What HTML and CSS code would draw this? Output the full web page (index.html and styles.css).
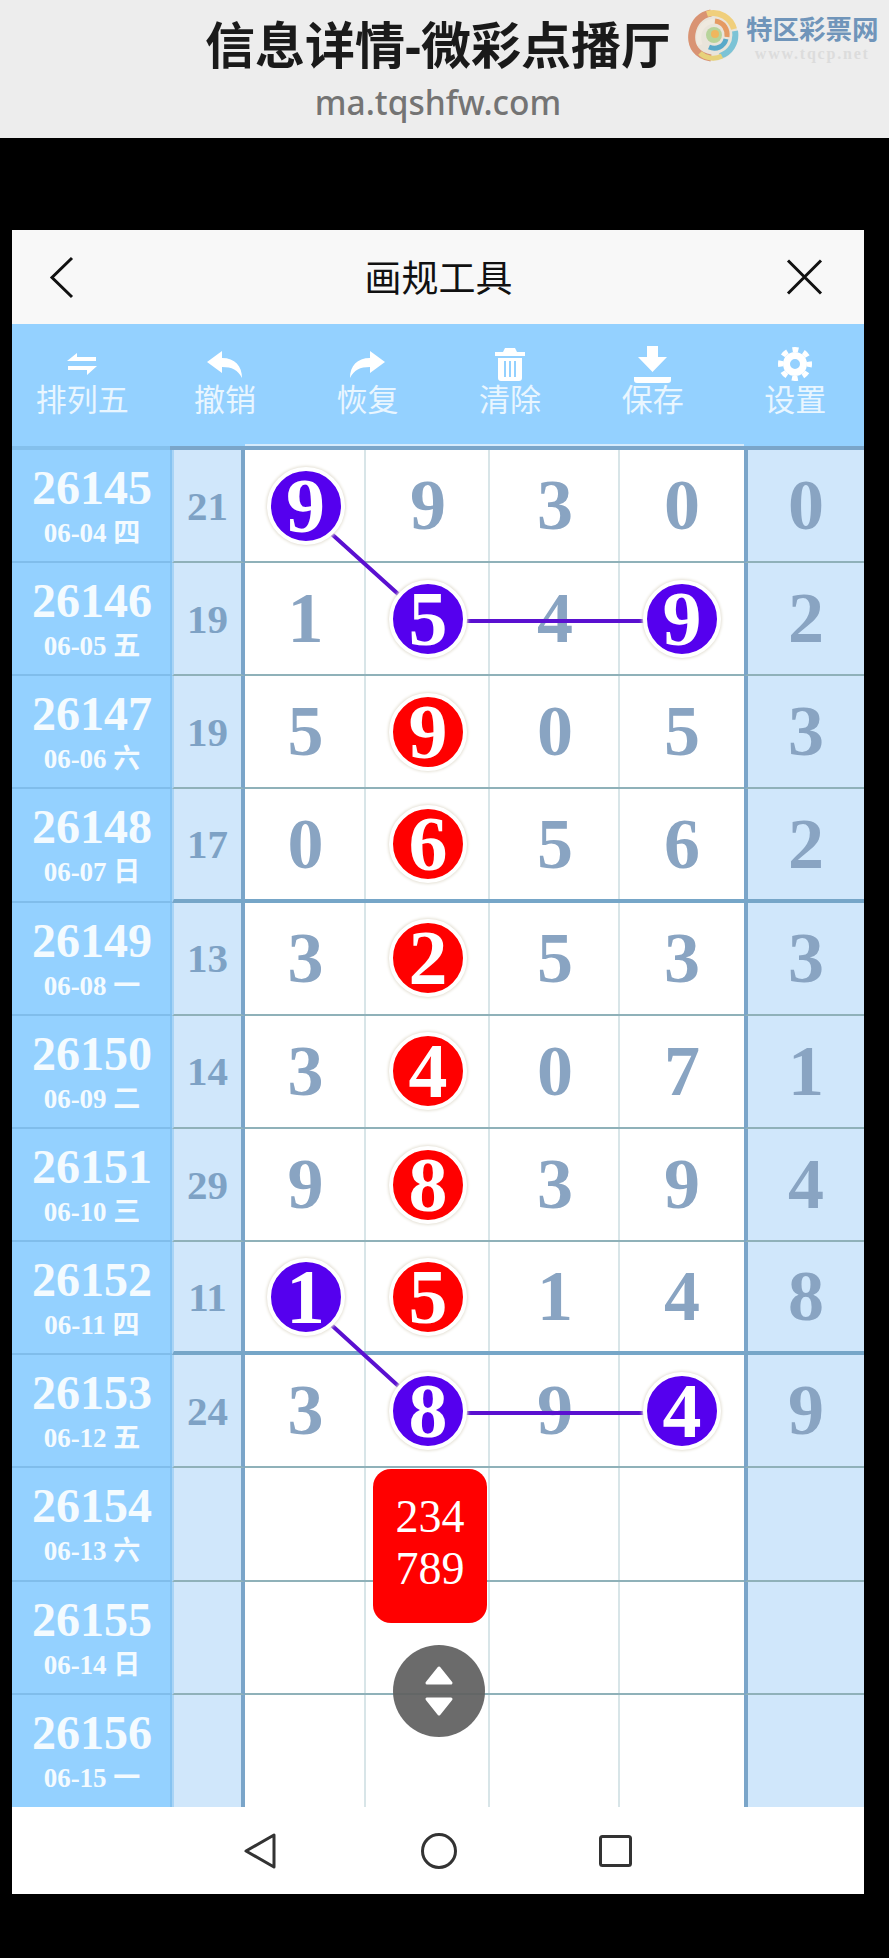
FILE: index.html
```html
<!DOCTYPE html>
<html lang="zh">
<head>
  <meta charset="UTF-8">
  <title>信息详情-微彩点播厅</title>
  <link rel="stylesheet" href="styles.css">
</head>
<body>
  <header class="site-head">
    <h1>信息详情-微彩点播厅</h1>
    <p class="site-url">ma.tqshfw.com</p>
    <div class="logo">
      <svg class="logo-mark" width="52" height="54" viewBox="0 0 52 54" fill="none">
        <circle cx="26" cy="27" r="25" fill="#e9e4da"/>
        <path d="M24 49C10 47 3 37 5 24C7 13 14 6 24 4" stroke="#d99373" stroke-width="7"/>
        <path d="M20 5C32 1 44 9 47 20" stroke="#f0cf7c" stroke-width="6"/>
        <path d="M48 22C50 34 43 44 33 47" stroke="#7cc3d6" stroke-width="6"/>
        <path d="M35 47C27 51 18 49 13 44" stroke="#e7d27a" stroke-width="5"/>
        <path d="M13 36C9 24 15 13 27 12" stroke="#efe9df" stroke-width="5"/>
        <path d="M28 12C37 13 41 21 40 28" stroke="#e59a62" stroke-width="5"/>
        <path d="M39 30C37 38 29 41 22 38" stroke="#59a9c9" stroke-width="5"/>
        <circle cx="27" cy="26" r="8" fill="#b7d39a"/>
        <circle cx="28" cy="25" r="4" fill="#f0b65e"/>
      </svg>
      <div class="logo-text">
        <div class="logo-name">特区彩票网</div>
        <div class="logo-web">www.tqcp.net</div>
      </div>
    </div>
  </header>

  <main class="panel">
    <nav class="title-bar">
      <svg width="26" height="43" viewBox="0 0 26 43" fill="none"><path d="M23 2L3 21.5L23 41" stroke="#111" stroke-width="3"/></svg>
      <div class="title-text">画规工具</div>
      <svg width="37" height="36" viewBox="0 0 37 36" fill="none"><path d="M2 1.5L35 34.5M35 1.5L2 34.5" stroke="#111" stroke-width="3"/></svg>
    </nav>

    <div class="toolbar">
      <div class="tool">
        <span class="tool-icon"><svg width="30" height="24" viewBox="0 0 30 24" fill="#fff"><path d="M0 9L10 1V5H29V9ZM1 14H30L20 23V18H1Z"/></svg></span>
        <span>排列五</span>
      </div>
      <div class="tool">
        <span class="tool-icon"><svg width="36" height="27" viewBox="0 0 36 27" fill="#fff"><path d="M0 11L15 0V7C28 7 35 15 35 27C31 19 25 16 15 16V22Z"/></svg></span>
        <span>撤销</span>
      </div>
      <div class="tool">
        <span class="tool-icon"><svg width="36" height="27" viewBox="0 0 36 27" fill="#fff"><path d="M36 11L21 0V7C8 7 1 15 1 27C5 19 11 16 21 16V22Z"/></svg></span>
        <span>恢复</span>
      </div>
      <div class="tool">
        <span class="tool-icon"><svg width="30" height="33" viewBox="0 0 30 33" fill="#fff"><path d="M10 0H20L22 4H30V8H0V4H8ZM3 10H27V30Q27 33 24 33H6Q3 33 3 30ZM9 13V29H11V13ZM14 13V29H16V13ZM19 13V29H21V13Z" fill-rule="evenodd"/></svg></span>
        <span>清除</span>
      </div>
      <div class="tool">
        <span class="tool-icon"><svg width="37" height="37" viewBox="0 0 37 37" fill="#fff"><path d="M13 0H24V11H33L18.500 26L4 11H13ZM0 31H37V34Q37 37 34 37H3Q0 37 0 34Z"/></svg></span>
        <span>保存</span>
      </div>
      <div class="tool">
        <span class="tool-icon"><svg width="34" height="34" viewBox="0 0 34 34" fill="none" stroke="#fff"><circle cx="17" cy="17" r="8.500" stroke-width="7"/><circle cx="17" cy="17" r="14.500" stroke-width="5" stroke-dasharray="6 5.390" stroke-dashoffset="3"/></svg></span>
        <span>设置</span>
      </div>
    </div>

    <section class="board">
      <div class="row">
        <div class="issue"><b>26145</b><small>06-04 四</small></div><div class="sum">21</div>
        <div class="cell"><i class="ball blue">9</i></div><div class="cell">9</div><div class="cell">3</div><div class="cell">0</div><div class="tail">0</div>
      </div>
      <div class="row">
        <div class="issue"><b>26146</b><small>06-05 五</small></div><div class="sum">19</div>
        <div class="cell">1</div><div class="cell"><i class="ball blue">5</i></div><div class="cell">4</div><div class="cell"><i class="ball blue">9</i></div><div class="tail">2</div>
      </div>
      <div class="row">
        <div class="issue"><b>26147</b><small>06-06 六</small></div><div class="sum">19</div>
        <div class="cell">5</div><div class="cell"><i class="ball red">9</i></div><div class="cell">0</div><div class="cell">5</div><div class="tail">3</div>
      </div>
      <div class="row heavy">
        <div class="issue"><b>26148</b><small>06-07 日</small></div><div class="sum">17</div>
        <div class="cell">0</div><div class="cell"><i class="ball red">6</i></div><div class="cell">5</div><div class="cell">6</div><div class="tail">2</div>
      </div>
      <div class="row">
        <div class="issue"><b>26149</b><small>06-08 一</small></div><div class="sum">13</div>
        <div class="cell">3</div><div class="cell"><i class="ball red">2</i></div><div class="cell">5</div><div class="cell">3</div><div class="tail">3</div>
      </div>
      <div class="row">
        <div class="issue"><b>26150</b><small>06-09 二</small></div><div class="sum">14</div>
        <div class="cell">3</div><div class="cell"><i class="ball red">4</i></div><div class="cell">0</div><div class="cell">7</div><div class="tail">1</div>
      </div>
      <div class="row">
        <div class="issue"><b>26151</b><small>06-10 三</small></div><div class="sum">29</div>
        <div class="cell">9</div><div class="cell"><i class="ball red">8</i></div><div class="cell">3</div><div class="cell">9</div><div class="tail">4</div>
      </div>
      <div class="row heavy">
        <div class="issue"><b>26152</b><small>06-11 四</small></div><div class="sum">11</div>
        <div class="cell"><i class="ball blue">1</i></div><div class="cell"><i class="ball red">5</i></div><div class="cell">1</div><div class="cell">4</div><div class="tail">8</div>
      </div>
      <div class="row">
        <div class="issue"><b>26153</b><small>06-12 五</small></div><div class="sum">24</div>
        <div class="cell">3</div><div class="cell"><i class="ball blue">8</i></div><div class="cell">9</div><div class="cell"><i class="ball blue">4</i></div><div class="tail">9</div>
      </div>
      <div class="row">
        <div class="issue"><b>26154</b><small>06-13 六</small></div><div class="sum"></div>
        <div class="cell"></div><div class="cell"></div><div class="cell"></div><div class="cell"></div><div class="tail"></div>
      </div>
      <div class="row">
        <div class="issue"><b>26155</b><small>06-14 日</small></div><div class="sum"></div>
        <div class="cell"></div><div class="cell"></div><div class="cell"></div><div class="cell"></div><div class="tail"></div>
      </div>
      <div class="row last">
        <div class="issue"><b>26156</b><small>06-15 一</small></div><div class="sum"></div>
        <div class="cell"></div><div class="cell"></div><div class="cell"></div><div class="cell"></div><div class="tail"></div>
      </div>

      <svg class="links" width="852" height="1362" viewBox="0 0 852 1362" fill="none" stroke="#5a10d0" stroke-width="4">
        <path d="M292 59L416 171H670"/>
        <path d="M292 850L416 963H670"/>
      </svg>

      <div class="hint">234<br>789</div>
      <div class="scroll-btn">
        <svg width="30" height="60" viewBox="0 0 30 60" fill="#fff" stroke="#fff" stroke-width="3" stroke-linejoin="round"><path d="M15 7L27 22H3Z"/><path d="M3 38H27L15 53Z"/></svg>
      </div>
    </section>

    <footer class="sys-nav">
      <svg width="32" height="36" viewBox="0 0 32 36" fill="none" stroke="#333" stroke-width="3" stroke-linejoin="round"><path d="M30 2V34L2 18Z"/></svg>
      <svg width="36" height="36" viewBox="0 0 36 36" fill="none" stroke="#333" stroke-width="3"><circle cx="18" cy="18" r="16.500"/></svg>
      <svg class="sys-square" width="33" height="32" viewBox="0 0 33 32" fill="none" stroke="#333" stroke-width="3"><rect x="1.500" y="1.500" width="30" height="29" rx="2"/></svg>
    </footer>
  </main>
</body>
</html>
```

FILE: styles.css
```css
body {
  margin: 0;
  background: #000;
  font-family: "Liberation Serif", "Noto Sans CJK SC", serif;
}

.site-head {
  position: relative;
  height: 138px;
  padding-right: 13px;
  box-sizing: border-box;
  background: #ededed;
  text-align: center;
  font-family: "Noto Sans", "Noto Sans CJK SC", sans-serif;
}

.site-head h1 {
  margin: 0;
  padding-top: 10px;
  font-size: 50px;
  line-height: 70px;
  font-weight: 700;
  color: #1a1a1a;
}

.site-url {
  margin: 0;
  font-size: 33.500px;
  line-height: 44px;
  font-weight: 500;
  color: #747474;
}

.logo {
  position: absolute;
  left: 687px;
  top: 9px;
  display: flex;
  gap: 7px;
}

.logo-name {
  margin-top: 6px;
  font-size: 26.500px;
  line-height: 28px;
  font-weight: 700;
  color: #7095ba;
  white-space: nowrap;
}

.logo-web {
  margin-top: 1px;
  font-family: "Liberation Serif", serif;
  font-size: 16px;
  line-height: 20px;
  font-weight: 700;
  letter-spacing: 1.800px;
  color: #dcdcdc;
}

.panel {
  width: 852px;
  margin: 92px 0 0 12px;
  background: #fff;
}

.title-bar {
  display: flex;
  align-items: center;
  justify-content: space-between;
  height: 94px;
  padding: 0 41px 0 37px;
  background: #f8f8f8;
  font-family: "Noto Sans CJK SC", sans-serif;
}

.title-text {
  margin: 0 0 3px 16px;
  font-size: 37px;
  color: #111;
}

.toolbar {
  display: flex;
  height: 122px;
  background: #94d1ff;
  font-family: "Noto Sans CJK SC", sans-serif;
  font-size: 31px;
  color: #e9f6ff;
}

.tool {
  flex: none;
  display: flex;
  flex-direction: column;
  align-items: center;
  width: 142.600px;
  line-height: 40px;
}

.tool:first-child {
  margin-left: -1px;
}

.tool:last-child {
  width: 139px;
  padding-left: 3.600px;
  box-sizing: border-box;
}

.tool-icon {
  display: flex;
  align-items: center;
  height: 38px;
  margin: 21px 0 -5px;
}

.board {
  position: relative;
  border-top: 4px solid #7aa5c9;
}

/* the rule over the date column is paler, and a light band sits over the number cells */
.board::before {
  content: "";
  position: absolute;
  left: 0;
  top: -4px;
  width: 158px;
  height: 4px;
  background: #84c0ec;
}

.board::after {
  content: "";
  position: absolute;
  left: 233px;
  top: -6px;
  width: 499px;
  height: 2px;
  background: #d6ebfc;
}

.row {
  display: grid;
  grid-template-columns: 160px 73px 121px 124px 130px 124px 120px;
  height: 113.170px;
}

.row > div {
  box-sizing: border-box;
  border-bottom: 2px solid #8fb1b9;
}

.row.heavy > div {
  border-bottom: 4px solid #76a6c8;
}

.row.last {
  height: 112px;
}

.row.last > div {
  border-bottom: 0;
}

.row > .issue,
.row.heavy > .issue {
  display: flex;
  flex-direction: column;
  align-items: center;
  border-bottom: 2px solid #80bdeb;
  background: #94d1ff;
  box-shadow: inset -2px 0 0 #85c3f1;
  color: #f4fbff;
  font-weight: 700;
}

.row.last > .issue {
  border-bottom: 0;
}

.issue b {
  margin-top: 13px;
  font-size: 48px;
  line-height: 50px;
}

.issue small {
  margin-top: 2px;
  font-size: 27px;
  line-height: 36px;
}

.sum,
.cell,
.tail {
  display: flex;
  align-items: center;
  justify-content: center;
  font-weight: 700;
}

.sum {
  background: #d0e7fb;
  border-left: 2px solid #a8d4f6;
  border-right: 4px solid #7aa5c9;
  font-size: 41px;
  color: #7ea2c5;
}

.cell {
  box-shadow: inset -2px 0 0 #d8e5e8;
  font-size: 72px;
  color: #89a4c2;
}

.cell:nth-child(6) {
  box-shadow: none;
}

.tail {
  background: #d0e7fb;
  border-left: 4px solid #7aa5c9;
  font-size: 72px;
  color: #89a4c2;
}

.ball {
  position: relative;
  z-index: 2;
  display: flex;
  align-items: center;
  justify-content: center;
  width: 70px;
  height: 70px;
  border: 4px solid #fff;
  border-radius: 50%;
  box-shadow: 0 0 3px 1px #e4e0d4;
  font-style: normal;
  font-size: 78px;
  color: #fff;
}

.ball.blue {
  background: #5500ee;
}

.ball.red {
  background: #f00;
}

.links {
  position: absolute;
  left: 0;
  top: 0;
  z-index: 1;
}

.hint {
  position: absolute;
  left: 361px;
  top: 1019px;
  z-index: 2;
  width: 114px;
  height: 154px;
  padding-top: 22px;
  box-sizing: border-box;
  border-radius: 18px;
  background: #f00;
  text-align: center;
  font-size: 46px;
  line-height: 52px;
  color: #fff;
}

.scroll-btn {
  position: absolute;
  left: 381px;
  top: 1195px;
  z-index: 3;
  display: flex;
  align-items: center;
  justify-content: center;
  width: 92px;
  height: 92px;
  border-radius: 50%;
  background: rgba(96, 96, 96, 0.93);
}

.sys-nav {
  display: flex;
  align-items: center;
  height: 87px;
  padding: 2px 0 0 232px;
  box-sizing: border-box;
  gap: 145px;
  background: #fff;
}

.sys-square {
  margin-left: -3px;
}
```
